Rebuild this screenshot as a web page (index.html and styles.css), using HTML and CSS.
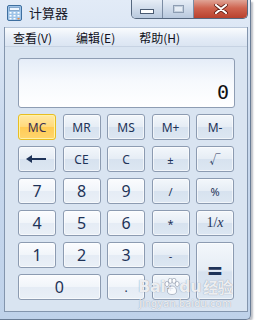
FILE: index.html
```html
<!DOCTYPE html>
<html>

<head>
    <meta charset="utf-8">
    <title>计算器</title>
    <link rel="stylesheet" href="styles.css">
</head>

<body>
    <div class="window">
        <div class="titlebar">
            <svg class="app-icon" width="15" height="16" viewBox="0 0 15 16">
                <rect x="0.5" y="0.5" width="14" height="15" rx="1.5" fill="#9fc4e8" stroke="#3f6f9f" />
                <rect x="2.5" y="2.5" width="10" height="3" fill="#eef6ff" stroke="#5b86b3" stroke-width="0.6" />
                <g fill="#ffffff">
                    <rect x="2.5" y="7" width="2" height="1.6" />
                    <rect x="6.5" y="7" width="2" height="1.6" />
                    <rect x="10.5" y="7" width="2" height="1.6" />
                    <rect x="2.5" y="10" width="2" height="1.6" />
                    <rect x="6.5" y="10" width="2" height="1.6" />
                    <rect x="10.5" y="10" width="2" height="1.6" />
                    <rect x="2.5" y="13" width="2" height="1.4" />
                    <rect x="6.5" y="13" width="2" height="1.4" />
                </g>
                <rect x="10.5" y="13" width="2" height="1.4" fill="#f08a3c" />
            </svg>
            <span class="title">计算器</span>
            <div class="caption">
                <div class="cap cap-min"><span class="min-bar"></span></div>
                <div class="cap cap-max"><span class="max-box"></span></div>
                <div class="cap cap-close">
                    <svg width="14" height="10" viewBox="0 0 14 10">
                        <path d="M2 1 L12 9 M12 1 L2 9" stroke="#5a1a12" stroke-width="3.6" stroke-linecap="round" />
                        <path d="M2 1 L12 9 M12 1 L2 9" stroke="#ffffff" stroke-width="2.2" stroke-linecap="round" />
                    </svg>
                </div>
            </div>
        </div>

        <div class="client">
            <div class="menubar">
                <span class="menu-item">查看(V)</span>
                <span class="menu-item">编辑(E)</span>
                <span class="menu-item">帮助(H)</span>
            </div>

            <div class="calc">
                <div class="display"><span class="value">0</span></div>

                <div class="keys">
                    <div class="key mem active">MC</div>
                    <div class="key mem">MR</div>
                    <div class="key mem">MS</div>
                    <div class="key mem">M+</div>
                    <div class="key mem">M-</div>

                    <div class="key op"><span class="arrow"></span></div>
                    <div class="key op">CE</div>
                    <div class="key op">C</div>
                    <div class="key op small">±</div>
                    <div class="key op small">√</div>

                    <div class="key num">7</div>
                    <div class="key num">8</div>
                    <div class="key num">9</div>
                    <div class="key op small">/</div>
                    <div class="key op small">%</div>

                    <div class="key num">4</div>
                    <div class="key num">5</div>
                    <div class="key num">6</div>
                    <div class="key op small">*</div>
                    <div class="key op recip">1/<i>x</i></div>

                    <div class="key num">1</div>
                    <div class="key num">2</div>
                    <div class="key num">3</div>
                    <div class="key op small">-</div>
                    <div class="key op equals">=</div>

                    <div class="key num zero">0</div>
                    <div class="key num small">.</div>
                    <div class="key op small">+</div>
                </div>
            </div>
        </div>

        <div class="watermark">
            <div class="wm-logo">
                <span>Bai</span>
                <svg class="paw" width="16" height="18" viewBox="0 0 16 18">
                    <g fill="rgba(255,255,255,0.85)" stroke="rgba(130,140,160,0.7)" stroke-width="0.8">
                        <ellipse cx="3" cy="6" rx="2" ry="2.6" />
                        <ellipse cx="6.3" cy="2.8" rx="2" ry="2.6" />
                        <ellipse cx="10" cy="2.8" rx="2" ry="2.6" />
                        <ellipse cx="13.2" cy="6" rx="2" ry="2.6" />
                        <path d="M8 8 C4 8 2.5 13 4 15 C5.5 17 10.5 17 12 15 C13.5 13 12 8 8 8 Z" />
                    </g>
                </svg>
                <span>du</span>
                <span class="wm-cn">经验</span>
            </div>
            <span class="wm-url">jingyan.baidu.com</span>
        </div>
    </div>
</body>

</html>
```

FILE: styles.css
```css
html {
    font-family: "Noto Sans", "Noto Sans CJK SC", sans-serif;
}

body {
    margin: 0;
    background: #ffffff;
}

.window {
    position: relative;
    width: 250px;
    height: 319px;
    background: linear-gradient(#e2ebf7, #c9d9ee 40%, #bfd2ea);
    border-right: 1px solid #6a7d96;
    border-bottom: 1px solid #6a7d96;
    border-bottom-right-radius: 5px;
    box-shadow: 2px 2px 2px rgba(60, 70, 90, 0.35);
    display: flex;
    flex-direction: column;
}

.titlebar {
    height: 27px;
    display: flex;
    align-items: flex-start;
    flex-shrink: 0;
}

.app-icon {
    margin: 5px 0 0 7px;
}

.title {
    margin: 4px 0 0 7px;
    font-family: "Noto Sans CJK SC", sans-serif;
    font-size: 13px;
    line-height: 18px;
    color: #1a1a2a;
}

.caption {
    margin-left: auto;
    margin-right: 2px;
    display: flex;
    height: 18px;
    border: 1px solid #56687f;
    border-top: none;
    border-radius: 0 0 5px 5px;
    overflow: hidden;
}

.cap {
    display: flex;
    align-items: center;
    justify-content: center;
}

.cap-min,
.cap-max {
    width: 30px;
    background: linear-gradient(#e6edf6, #cfdbea 50%, #b9c9de);
    border-right: 1px solid #7b8ca3;
}

.cap-close {
    width: 53px;
    background: linear-gradient(#e0a496, #cf6450 45%, #b8412e);
}

.min-bar {
    width: 12px;
    height: 3px;
    margin-top: 4px;
    background: #ffffff;
    border: 1px solid #4a5b72;
}

.max-box {
    width: 9px;
    height: 6px;
    border: 1px solid #8d9db2;
    background: #e6edf5;
    box-shadow: inset 0 0 0 1px #c3cfdd;
}

.client {
    flex: 1;
    margin: 0 2px 7px 4px;
    background: #d9e4f1;
    border: 1px solid #8395ad;
    border-top: none;
    display: flex;
    flex-direction: column;
}

.menubar {
    height: 18px;
    display: flex;
    align-items: center;
    padding-left: 8px;
    gap: 24px;
    background: linear-gradient(#f9fbfd, #e3ebf6 60%, #dbe5f2);
    border-top: 1px solid #b7c5d8;
    border-bottom: 1px solid #c7d3e3;
    font-family: "Noto Sans CJK SC", sans-serif;
    font-size: 12px;
    color: #101020;
}

.calc {
    padding: 11px 12px 0 13px;
}

.display {
    height: 48px;
    border: 1px solid #8e9db3;
    border-radius: 3px;
    background: linear-gradient(#e5edf8, #f6f9fd 45%, #ffffff);
    display: flex;
    align-items: flex-end;
    justify-content: flex-end;
    padding-right: 5px;
}

.value {
    font-family: "DejaVu Sans Mono", monospace;
    font-size: 20px;
    line-height: 26px;
    margin-bottom: 2px;
    color: #111111;
}

.keys {
    margin-top: 6px;
    display: grid;
    grid-template-columns: repeat(5, 38px);
    grid-auto-rows: 26px;
    column-gap: 6.5px;
    row-gap: 6px;
}

.key {
    display: flex;
    align-items: center;
    justify-content: center;
    border: 1px solid #8c9bb1;
    border-radius: 3px;
    background: linear-gradient(#f3f7fb, #e6edf5 48%, #d7e2ef 52%, #dde7f2);
    color: #1e3358;
    font-size: 12px;
    box-shadow: inset 0 0 0 1px rgba(255, 255, 255, 0.6);
}

.num {
    background: linear-gradient(#fbfcfe, #f1f5fa 48%, #e5ecf5 52%, #eaf0f7);
    font-size: 16px;
}

.num.small {
    font-size: 12px;
}

.small {
    font-size: 11px;
}

.active {
    border-color: #e8bd22;
    background: linear-gradient(#ffe9a6, #ffd97a 50%, #ffcc55 52%, #ffd56e);
    box-shadow: inset 0 0 0 1px #fff2a8;
    color: #3a2f50;
}

.arrow {
    position: relative;
    width: 18px;
    height: 2px;
    background: #1e3358;
}

.arrow::before {
    content: "";
    position: absolute;
    left: -2px;
    top: -3px;
    border-right: 6px solid #1e3358;
    border-top: 4px solid transparent;
    border-bottom: 4px solid transparent;
}

.recip {
    font-family: "Liberation Serif", serif;
    font-size: 14px;
}

.equals {
    grid-row: span 2;
    font-size: 26px;
    font-weight: bold;
}

.zero {
    grid-column: span 2;
}

.watermark {
    position: absolute;
    left: 140px;
    top: 276px;
    width: 90px;
    display: flex;
    flex-direction: column;
    align-items: center;
    color: rgba(255, 255, 255, 0.85);
    text-shadow: 0 0 1px rgba(120, 130, 150, 0.9);
    pointer-events: none;
    white-space: nowrap;
}

.wm-logo {
    display: flex;
    align-items: center;
    font-family: "DejaVu Sans", sans-serif;
    font-size: 16px;
    font-weight: bold;
    line-height: 22px;
    letter-spacing: -0.5px;
}

.paw {
    margin: 0 -1px;
}

.wm-cn {
    margin-left: 2px;
    font-family: "Noto Sans CJK SC", sans-serif;
    font-size: 15px;
}

.wm-url {
    font-family: "DejaVu Sans", sans-serif;
    font-size: 10px;
    line-height: 12px;
}
```
